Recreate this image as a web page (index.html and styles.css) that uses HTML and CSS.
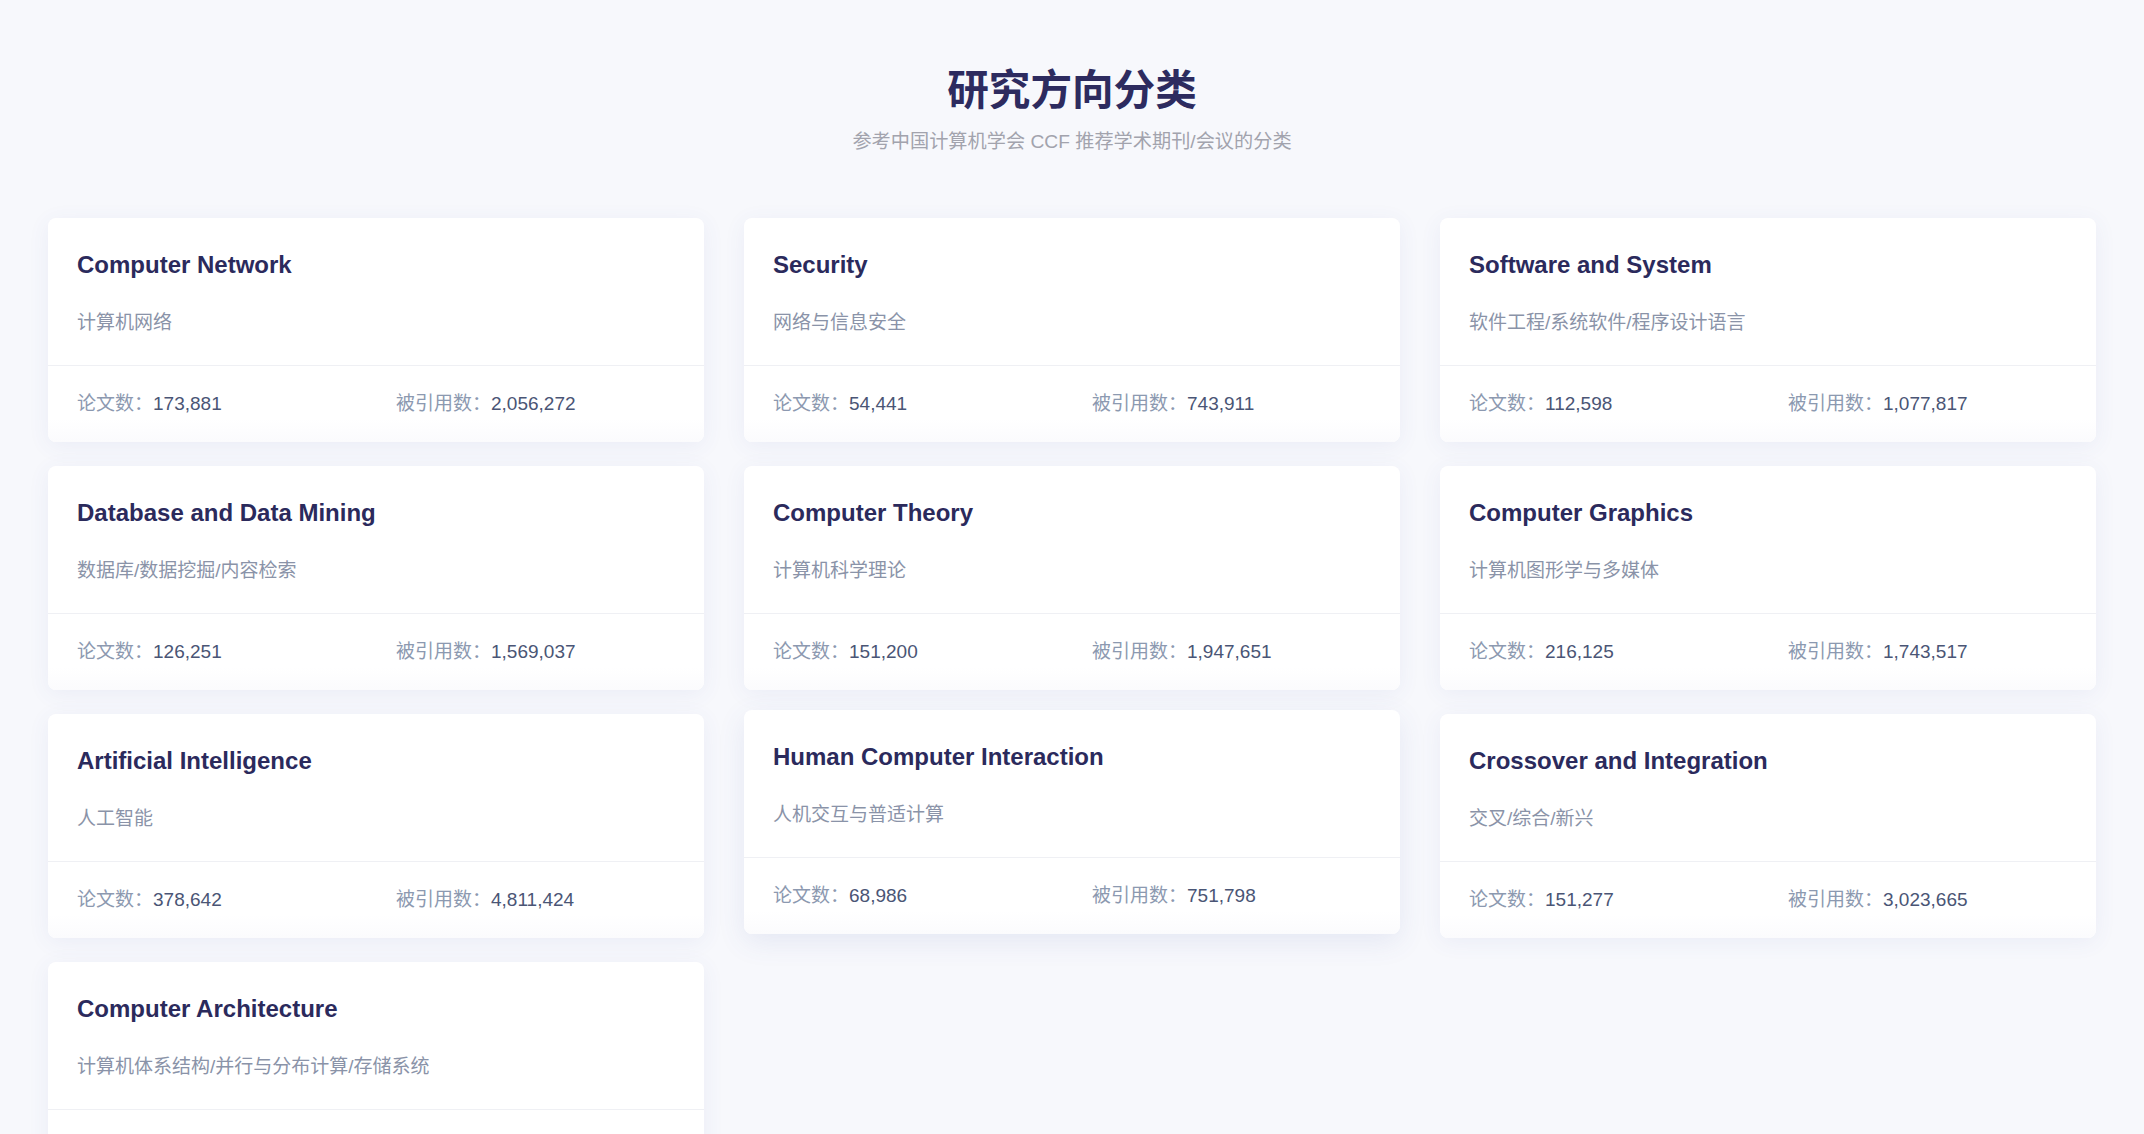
FILE: index.html
```html
<!DOCTYPE html>
<html lang="zh-CN">
<head>
<meta charset="utf-8">
<title>研究方向分类</title>
<link rel="stylesheet" href="styles.css">
</head>
<body>
<div class="page">
  <header class="head">
    <h1 class="head-title">研究方向分类</h1>
    <p class="head-sub">参考中国计算机学会 CCF 推荐学术期刊/会议的分类</p>
  </header>
  <main class="grid">
    <section class="card">
      <div class="card-top">
        <h2 class="card-title">Computer Network</h2>
        <p class="card-sub">计算机网络</p>
      </div>
      <div class="card-stats">
        <div class="stat"><span class="stat-label">论文数：</span><span class="stat-value">173,881</span></div>
        <div class="stat"><span class="stat-label">被引用数：</span><span class="stat-value">2,056,272</span></div>
      </div>
    </section>
    <section class="card">
      <div class="card-top">
        <h2 class="card-title">Security</h2>
        <p class="card-sub">网络与信息安全</p>
      </div>
      <div class="card-stats">
        <div class="stat"><span class="stat-label">论文数：</span><span class="stat-value">54,441</span></div>
        <div class="stat"><span class="stat-label">被引用数：</span><span class="stat-value">743,911</span></div>
      </div>
    </section>
    <section class="card">
      <div class="card-top">
        <h2 class="card-title">Software and System</h2>
        <p class="card-sub">软件工程/系统软件/程序设计语言</p>
      </div>
      <div class="card-stats">
        <div class="stat"><span class="stat-label">论文数：</span><span class="stat-value">112,598</span></div>
        <div class="stat"><span class="stat-label">被引用数：</span><span class="stat-value">1,077,817</span></div>
      </div>
    </section>
    <section class="card">
      <div class="card-top">
        <h2 class="card-title">Database and Data Mining</h2>
        <p class="card-sub">数据库/数据挖掘/内容检索</p>
      </div>
      <div class="card-stats">
        <div class="stat"><span class="stat-label">论文数：</span><span class="stat-value">126,251</span></div>
        <div class="stat"><span class="stat-label">被引用数：</span><span class="stat-value">1,569,037</span></div>
      </div>
    </section>
    <section class="card">
      <div class="card-top">
        <h2 class="card-title">Computer Theory</h2>
        <p class="card-sub">计算机科学理论</p>
      </div>
      <div class="card-stats">
        <div class="stat"><span class="stat-label">论文数：</span><span class="stat-value">151,200</span></div>
        <div class="stat"><span class="stat-label">被引用数：</span><span class="stat-value">1,947,651</span></div>
      </div>
    </section>
    <section class="card">
      <div class="card-top">
        <h2 class="card-title">Computer Graphics</h2>
        <p class="card-sub">计算机图形学与多媒体</p>
      </div>
      <div class="card-stats">
        <div class="stat"><span class="stat-label">论文数：</span><span class="stat-value">216,125</span></div>
        <div class="stat"><span class="stat-label">被引用数：</span><span class="stat-value">1,743,517</span></div>
      </div>
    </section>
    <section class="card">
      <div class="card-top">
        <h2 class="card-title">Artificial Intelligence</h2>
        <p class="card-sub">人工智能</p>
      </div>
      <div class="card-stats">
        <div class="stat"><span class="stat-label">论文数：</span><span class="stat-value">378,642</span></div>
        <div class="stat"><span class="stat-label">被引用数：</span><span class="stat-value">4,811,424</span></div>
      </div>
    </section>
    <section class="card card-hover">
      <div class="card-top">
        <h2 class="card-title">Human Computer Interaction</h2>
        <p class="card-sub">人机交互与普适计算</p>
      </div>
      <div class="card-stats">
        <div class="stat"><span class="stat-label">论文数：</span><span class="stat-value">68,986</span></div>
        <div class="stat"><span class="stat-label">被引用数：</span><span class="stat-value">751,798</span></div>
      </div>
    </section>
    <section class="card">
      <div class="card-top">
        <h2 class="card-title">Crossover and Integration</h2>
        <p class="card-sub">交叉/综合/新兴</p>
      </div>
      <div class="card-stats">
        <div class="stat"><span class="stat-label">论文数：</span><span class="stat-value">151,277</span></div>
        <div class="stat"><span class="stat-label">被引用数：</span><span class="stat-value">3,023,665</span></div>
      </div>
    </section>
    <section class="card">
      <div class="card-top">
        <h2 class="card-title">Computer Architecture</h2>
        <p class="card-sub">计算机体系结构/并行与分布计算/存储系统</p>
      </div>
      <div class="card-stats">
        <div class="stat"><span class="stat-label">论文数：</span><span class="stat-value">98,402</span></div>
        <div class="stat"><span class="stat-label">被引用数：</span><span class="stat-value">1,120,356</span></div>
      </div>
    </section>
  </main>
</div>
</body>
</html>
```

FILE: styles.css
```css
* {
  box-sizing: border-box;
}

html, body {
  margin: 0;
  padding: 0;
}

body {
  background: #f7f8fc;
  font-family: "Liberation Sans", "Noto Sans CJK SC", sans-serif;
  color: #2b2a5c;
}

.page {
  padding: 62px 48px 40px;
}

.head {
  text-align: center;
}

.head-title {
  margin: 0;
  font-family: "Noto Sans CJK SC", sans-serif;
  font-size: 41.6px;
  line-height: 50px;
  font-weight: 700;
  color: #2d2b5f;
}

.head-sub {
  margin: 15px 0 0;
  font-size: 19.2px;
  line-height: 29px;
  color: #a2a3ad;
}

.grid {
  margin-top: 62px;
  display: grid;
  grid-template-columns: repeat(3, 1fr);
  column-gap: 40px;
  row-gap: 24px;
  align-items: start;
}

.card {
  background: #ffffff;
  border-radius: 8px;
  box-shadow: 0 4px 22px rgba(70, 90, 170, 0.07);
  overflow: hidden;
}

.card-hover {
  transform: translateY(-4px);
  box-shadow: 0 8px 28px rgba(70, 90, 170, 0.1);
}

.card-top {
  padding: 30px 29px 27px;
  border-bottom: 1px solid #eff0f4;
}

.card-title {
  margin: 0;
  font-size: 24px;
  line-height: 34px;
  font-weight: 700;
  color: #2b2a5c;
}

.card-sub {
  margin: 25px 0 0;
  font-size: 19px;
  line-height: 31px;
  color: #8a93a8;
}

.card-stats {
  display: grid;
  grid-template-columns: 1fr 1fr;
  column-gap: 40px;
  padding: 28px 29px;
  font-size: 19px;
  line-height: 20px;
  background: linear-gradient(to bottom, #ffffff 70%, #fbfbfd 100%);
}

.stat {
  white-space: nowrap;
}

.stat-label {
  color: #8c99b0;
}

.stat-value {
  color: #4a5575;
}
```
